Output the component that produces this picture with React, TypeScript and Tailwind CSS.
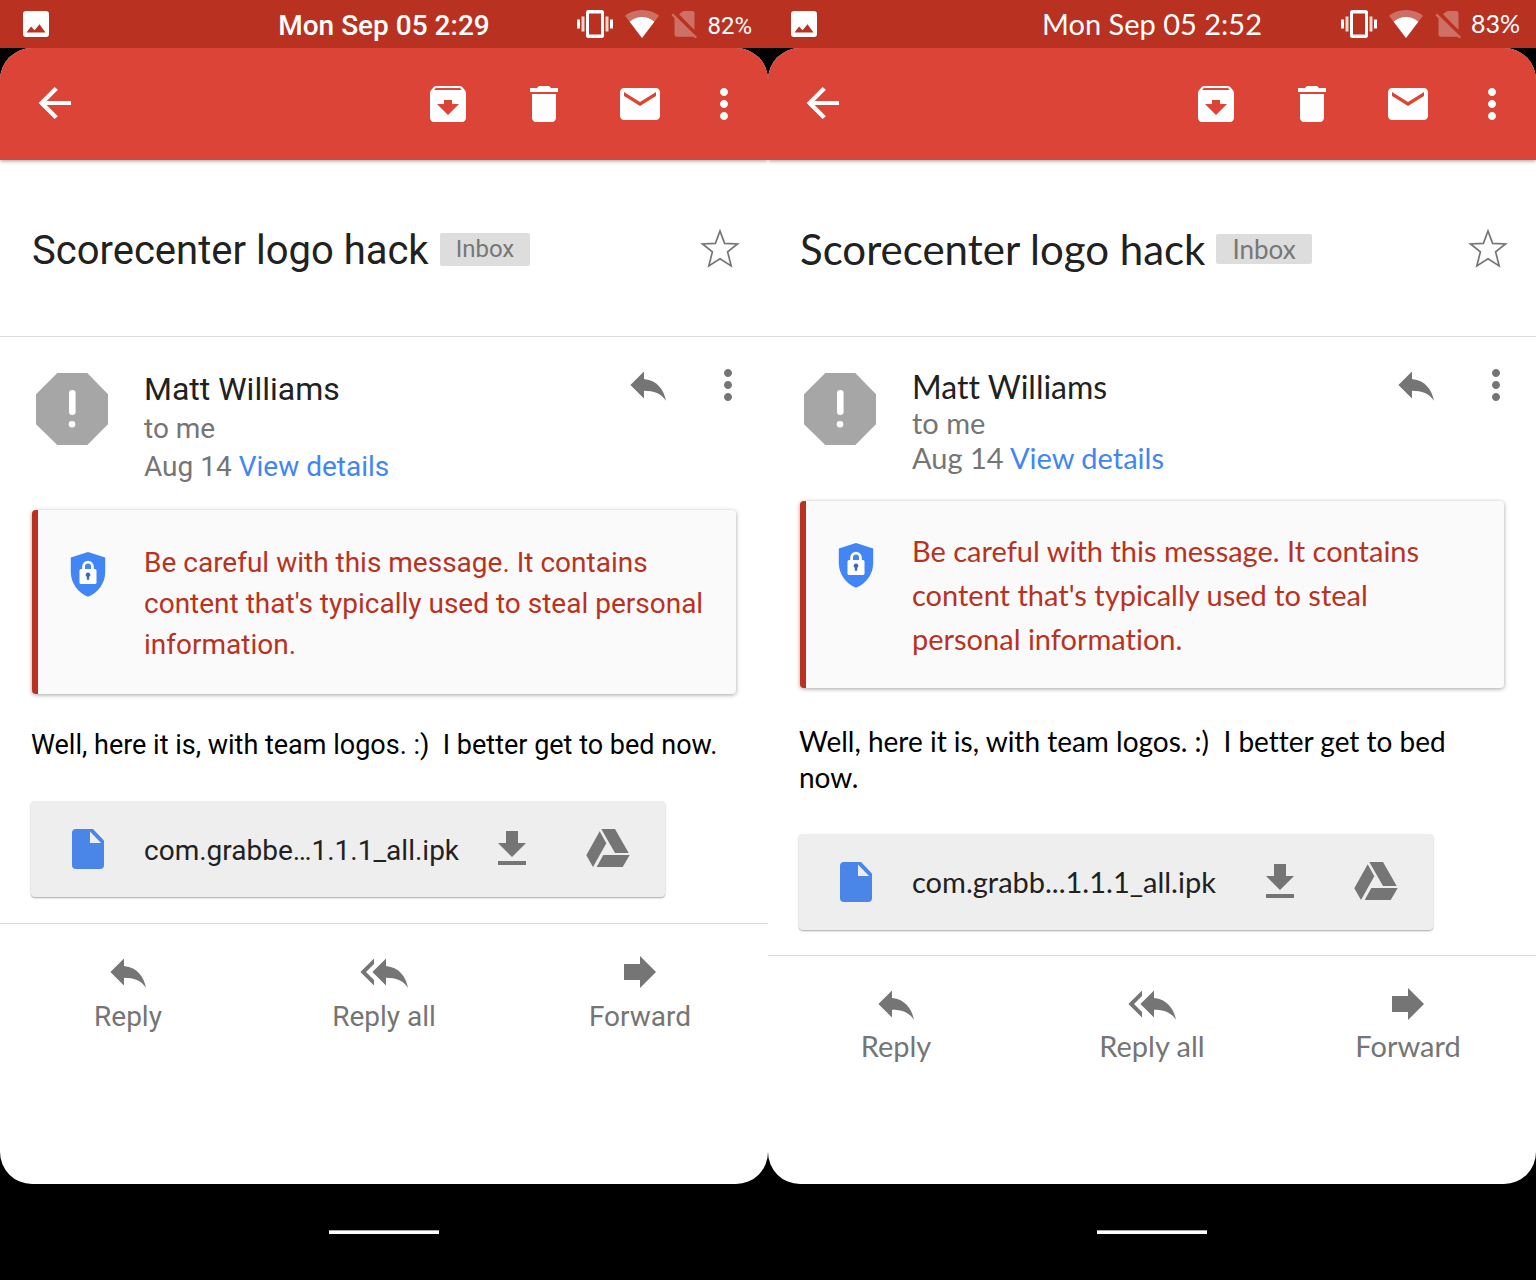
import React from "react";

type Theme = {
  time: string;
  battery: string;
  attachment: string;
  font: string;
  clock: string;
  percent: string;
  title: string;
  badge: string;
  name: string;
  meta: string;
  card: string;
  cardText: string;
  body: string;
  file: string;
  divider: string;
  action: string;
};

const roboto: Theme = {
  time: "Mon Sep 05 2:29",
  battery: "82%",
  attachment: "com.grabbe…1.1.1_all.ipk",
  font: "font-['Roboto',sans-serif]",
  clock: "text-[28px] font-medium pt-1",
  percent: "text-[24px] pt-1",
  title: "text-[40px] pt-1",
  badge: "text-[24px] leading-[33px]",
  name: "text-[32px] leading-[42px]",
  meta: "text-[28px] leading-[38px]",
  card: "mt-6 pb-[29px]",
  cardText: "text-[28px] leading-[41px] pt-8",
  body: "text-[27px] leading-[33px]",
  file: "text-[28px] pt-1",
  divider: "mt-[26px]",
  action: "text-[28px] leading-[42px]",
};

const lato: Theme = {
  time: "Mon Sep 05 2:52",
  battery: "83%",
  attachment: "com.grabb...1.1.1_all.ipk",
  font: "font-['Lato',sans-serif] [font-variant-ligatures:none]",
  clock: "text-[29px]",
  percent: "text-[25px]",
  title: "text-[42px]",
  badge: "text-[26px] leading-[30px]",
  name: "text-[32px] leading-[37px]",
  meta: "text-[29px] leading-[35px]",
  card: "mt-[26px] pb-[27px]",
  cardText: "text-[29px] leading-[44px] pt-7",
  body: "text-[28px] leading-[36px]",
  file: "text-[29px]",
  divider: "mt-[25px]",
  action: "text-[29px] leading-[36px]",
};

const ARCHIVE =
  "M20.54 5.23l-1.39-1.68C18.88 3.21 18.47 3 18 3H6c-.47 0-.88.21-1.16.55L3.46 5.23C3.17 5.57 3 6.02 3 6.5V19c0 1.1.9 2 2 2h14c1.1 0 2-.9 2-2V6.5c0-.48-.17-.93-.46-1.27zM12 17.5L6.5 12H10v-2h4v2h3.5L12 17.5zM5.12 5l.81-1h12l.94 1H5.12z";
const TRASH = "M6 19c0 1.1.9 2 2 2h8c1.1 0 2-.9 2-2V7H6v12zM19 4h-3.5l-1-1h-5l-1 1H5v2h14V4z";
const MAIL =
  "M20 4H4c-1.1 0-2 .9-2 2v12c0 1.1.9 2 2 2h16c1.1 0 2-.9 2-2V6c0-1.1-.9-2-2-2zm0 4l-8 5-8-5V6l8 5 8-5v2z";
const MORE =
  "M12 8c1.1 0 2-.9 2-2s-.9-2-2-2-2 .9-2 2 .9 2 2 2zm0 2c-1.1 0-2 .9-2 2s.9 2 2 2 2-.9 2-2-.9-2-2-2zm0 6c-1.1 0-2 .9-2 2s.9 2 2 2 2-.9 2-2-.9-2-2-2z";
const BACK = "M20 10.500H7.830l5.590-5.590L11.800 3.500l-8 8 8 8 1.610-1.410L7.830 12.500H20v-2z";
const REPLY = "M10 9V5.2l-6.8 6.8 6.8 6.8v-3.9c5 0 8.5 1.3 11 5-1-5-4-10.2-11-10.9z";
const REPLY_ALL =
  "M7 8V5.2L.2 12 7 18.8V16l-4-4 4-4zm6 1V5.2L6.2 12l6.8 6.8v-3.9c5 0 8.5 1.3 11 5-1-5-4-10.2-11-10.9z";
const FORWARD = "M12 8V4l8 8-8 8v-4H4V8z";
const DOWNLOAD = "M19 9h-4V3H9v6H5l7 7 7-7zM5 18v2h14v-2H5z";

function Icon({ d }: { d: string }) {
  return (
    <svg viewBox="0 0 24 24" className="size-12 shrink-0" fill="currentColor" aria-hidden="true">
      <path d={d} />
    </svg>
  );
}

function IconButton({ label, children }: { label: string; children: React.ReactNode }) {
  return (
    <button type="button" aria-label={label} className="size-12 shrink-0 cursor-pointer">
      {children}
    </button>
  );
}

function StatusBar({ t }: { t: Theme }) {
  return (
    <div className="grid h-12 grid-cols-[1fr_auto_1fr] items-center bg-[#b93221] px-4 text-white">
      <svg viewBox="0 0 26 26" className="ml-[7px] size-[26px]" fill="currentColor" aria-hidden="true">
        <path
          fillRule="evenodd"
          d="M3 0h20a3 3 0 0 1 3 3v20a3 3 0 0 1-3 3H3a3 3 0 0 1-3-3V3a3 3 0 0 1 3-3zM3.500 21.500h19L16.500 13.300l-5 6-3.500-3.800z"
        />
      </svg>
      <div className={`${t.clock} whitespace-nowrap`}>{t.time}</div>
      <div className="flex items-center justify-end">
        <svg viewBox="0 0 36 28" className="mr-3 h-7 w-9" fill="currentColor" aria-hidden="true">
          <path
            fillRule="evenodd"
            d="M11.500 0h13A2.500 2.500 0 0 1 27 2.500v23a2.500 2.500 0 0 1-2.500 2.500h-13A2.500 2.500 0 0 1 9 25.500v-23A2.500 2.500 0 0 1 11.500 0zM12 3.500v21h12v-21z"
          />
          <path d="M0 9.500h3v9H0zM33 9.500h3v9h-3z" />
          <path opacity=".8" d="M4.500 6.500h3v15h-3zM28.500 6.500h3v15h-3z" />
        </svg>
        <svg viewBox="0 0 34 28" className="mr-3 h-7 w-[34px]" fill="currentColor" aria-hidden="true">
          <path opacity=".3" d="M17 0C10.500 0 4.500 2.200 0 5.800L17 28 34 5.800C29.500 2.200 23.500 0 17 0z" />
          <path d="M17 7C12.300 7 8 8.700 4.700 11.800L17 28l12.300-16.200C26 8.700 21.700 7 17 7z" />
        </svg>
        <svg viewBox="0 0 27 28" className="mr-[9px] h-7 w-[27px]" fill="currentColor" opacity=".3" aria-hidden="true">
          <path d="M8 4.200l3.500-2.600A2.500 2.500 0 0 1 13 1h8a2.500 2.500 0 0 1 2.500 2.500v16.400z" />
          <path d="M3.500 8.200L.500 5.200 2 3.500 26 27l-1.500 1.700-2-2H6a2.500 2.500 0 0 1-2.500-2.500z" />
        </svg>
        <span className={t.percent}>{t.battery}</span>
      </div>
    </div>
  );
}

function Toolbar() {
  return (
    <header className="flex h-28 shrink-0 items-center bg-[#dc4438] pr-5 pl-[31px] text-white shadow-[0_1px_4px_rgba(0,0,0,0.4)]">
      <IconButton label="Back">
        <Icon d={BACK} />
      </IconButton>
      <div className="ml-auto flex items-center gap-12">
        <IconButton label="Archive">
          <Icon d={ARCHIVE} />
        </IconButton>
        <IconButton label="Delete">
          <Icon d={TRASH} />
        </IconButton>
        <IconButton label="Mark as unread">
          <Icon d={MAIL} />
        </IconButton>
      </div>
      <div className="ml-9 flex">
        <IconButton label="More options">
          <Icon d={MORE} />
        </IconButton>
      </div>
    </header>
  );
}

function Subject({ t }: { t: Theme }) {
  return (
    <div className="flex h-[177px] shrink-0 items-center border-b border-[#dcdcdc] pt-[2px] pr-6 pl-8">
      <h1 className={`${t.title} whitespace-nowrap text-[#212121]`}>Scorecenter logo hack</h1>
      <span className={`${t.badge} ml-[11px] rounded-xs bg-[#dddddd] px-4 text-[#777777]`}>Inbox</span>
      <div className="ml-auto flex">
        <IconButton label="Star">
          <svg viewBox="0 0 48 48" className="size-12" fill="none" stroke="#757575" strokeWidth="1.700" aria-hidden="true">
            <path d="M24 6L28.600 18.400 41.500 18.900 31.600 26.900 35.200 40.900 24 33.800 12.800 40.900 16.400 26.900 6.500 18.900 19.400 18.400z" />
          </svg>
        </IconButton>
      </div>
    </div>
  );
}

function Sender({ t }: { t: Theme }) {
  return (
    <div className="flex items-start pr-4 pl-9">
      <svg viewBox="0 0 72 72" className="mt-9 size-[72px] shrink-0" aria-hidden="true">
        <path fill="#a6a6a6" d="M21.300 0h30L72 21.300v30L51.300 72h-30L0 51.300v-30z" />
        <rect x="33" y="17" width="6.600" height="25" rx="3.300" fill="#fff" />
        <circle cx="36" cy="51.300" r="3.300" fill="#fff" />
      </svg>
      <div className="mt-[31px] ml-9 flex-1 text-[#757575]">
        <div className={`${t.name} text-[#212121]`}>Matt Williams</div>
        <div className={t.meta}>to me</div>
        <div className={t.meta}>
          Aug 14{" "}
          <a href="#details" className="text-[#4285f4]">
            View details
          </a>
        </div>
      </div>
      <div className="mt-6 flex gap-8 text-[#757575]">
        <IconButton label="Reply">
          <Icon d={REPLY} />
        </IconButton>
        <IconButton label="More">
          <Icon d={MORE} />
        </IconButton>
      </div>
    </div>
  );
}

function Warning({ t }: { t: Theme }) {
  return (
    <div
      className={`${t.card} mx-8 flex items-start rounded-sm border-l-[6px] border-[#b93221] bg-[#fafafa] pr-6 pl-8 shadow-[0_1px_4px_rgba(0,0,0,0.36)]`}
    >
      <svg viewBox="0 0 36 46" className="mt-[42px] h-[46px] w-9 shrink-0" aria-hidden="true">
        <path fill="#4285f4" d="M18 0l17.200 5.500V20c0 11-7 20.500-17.200 24.800C7.800 40.500.8 31 .8 20V5.500z" />
        <path
          fill="#fff"
          fillRule="evenodd"
          d="M12.200 17v-2.500a5.800 5.800 0 0 1 11.600 0V17H25a1.500 1.500 0 0 1 1.500 1.500v12A1.500 1.500 0 0 1 25 32H11a1.500 1.500 0 0 1-1.500-1.500v-12A1.500 1.500 0 0 1 11 17zm2.800 0h6v-2.500a3 3 0 0 0-6 0z"
        />
        <path fill="#3a66b5" d="M18 20.500a2.300 2.300 0 0 1 1.200 4.300v3h-2.400v-3a2.300 2.300 0 0 1 1.200-4.300z" />
      </svg>
      <p className={`${t.cardText} ml-[38px] flex-1 text-[#b93221]`}>
        Be careful with this message. It contains content that's typically used to steal personal information.
      </p>
    </div>
  );
}

function Attachment({ t }: { t: Theme }) {
  return (
    <div className="mr-8 ml-[31px] flex h-24 max-w-[634px] items-center rounded-sm bg-[#eeeeee] pr-[33px] pl-[41px] shadow-[0_1px_2px_rgba(0,0,0,0.35)]">
      <svg viewBox="0 0 32 40" className="h-10 w-8 shrink-0" aria-hidden="true">
        <path fill="#4a86e8" d="M4 0h17l11 11.500V36a4 4 0 0 1-4 4H4a4 4 0 0 1-4-4V4a4 4 0 0 1 4-4z" />
        <path fill="#eee" d="M18 2.500V14h11z" />
      </svg>
      <span className={`${t.file} ml-10 flex-1 whitespace-nowrap text-[#212121]`}>{t.attachment}</span>
      <div className="flex gap-12 text-[#757575]">
        <IconButton label="Download">
          <Icon d={DOWNLOAD} />
        </IconButton>
        <IconButton label="Save to Drive">
          <svg viewBox="0 0 48 48" className="size-12" fill="currentColor" aria-hidden="true">
            <path d="M15.700 6.300l6.600 12L9 42 2.300 30.300zM17.300 4h13.700l13.700 24H31zM19.300 30h26.400l-7 12h-26z" />
          </svg>
        </IconButton>
      </div>
    </div>
  );
}

function Phone({ t }: { t: Theme }) {
  const actions = [
    { label: "Reply", d: REPLY },
    { label: "Reply all", d: REPLY_ALL },
    { label: "Forward", d: FORWARD },
  ];
  return (
    <section className={`${t.font} flex min-h-screen flex-col bg-black`}>
      <StatusBar t={t} />
      <main className="flex flex-1 flex-col overflow-hidden rounded-[32px] bg-white">
        <Toolbar />
        <Subject t={t} />
        <Sender t={t} />
        <Warning t={t} />
        <p className={`${t.body} mt-[35px] mr-8 mb-[39px] ml-[31px] whitespace-pre-wrap text-black`}>
          {"Well, here it is, with team logos. :)  I better get to bed now."}
        </p>
        <Attachment t={t} />
        <div className={`${t.divider} grid grid-cols-3 border-t border-[#dcdcdc] pt-6 text-[#757575]`}>
          {actions.map((a) => (
            <button key={a.label} type="button" className="flex cursor-pointer flex-col items-center">
              <Icon d={a.d} />
              <span className={t.action}>{a.label}</span>
            </button>
          ))}
        </div>
      </main>
      <footer className="flex h-24 items-center justify-center">
        <div className="h-1 w-[110px] border-t border-[#aaaaaa] bg-white" />
      </footer>
    </section>
  );
}

export default function App() {
  return (
    <div className="grid min-h-screen grid-cols-2 bg-black">
      <Phone t={roboto} />
      <Phone t={lato} />
    </div>
  );
}
